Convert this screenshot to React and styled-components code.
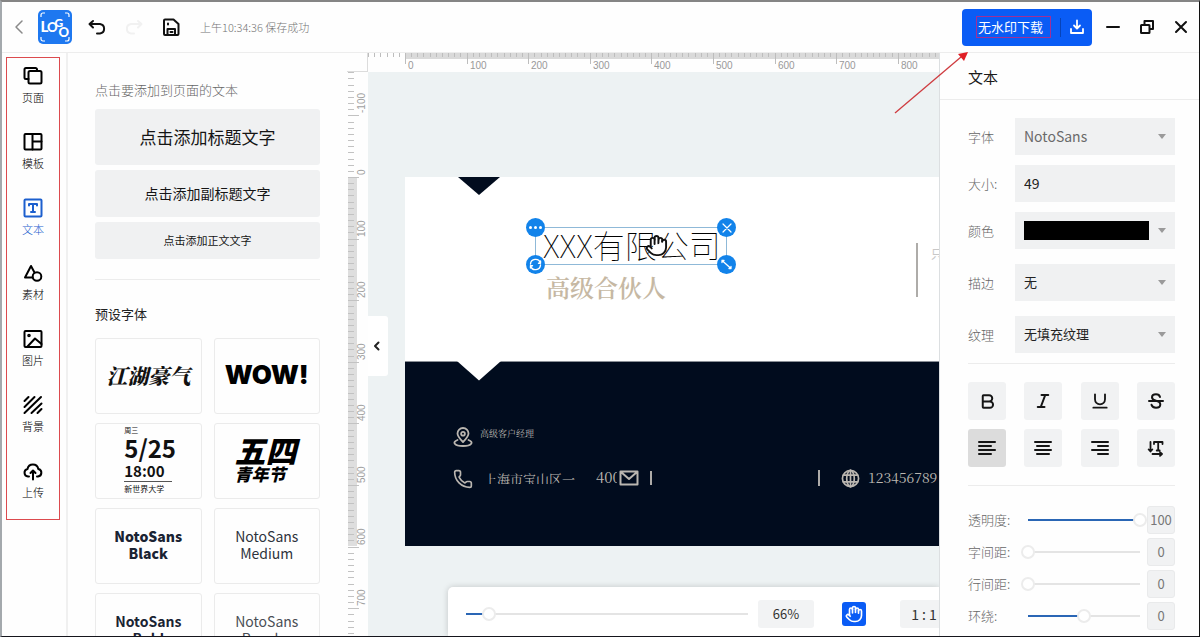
import React, { useState } from "react";
import styled, { createGlobalStyle, css } from "styled-components";
import { Bold, Italic, Underline, Hand, Phone } from "lucide-react";

const sans = `"Noto Sans CJK SC", "Noto Sans", sans-serif`;
const serif = `"Noto Serif CJK SC", "Liberation Serif", "Noto Sans CJK SC", serif`;

const GlobalStyle = createGlobalStyle`
  *, *::before, *::after { box-sizing: border-box; }
  body { margin: 0; font-family: ${sans}; color: #222; background: #fff; }
  button, input, select { font: inherit; color: inherit; margin: 0; padding: 0; border: 0; border-radius: 0; background: none; }
  button { cursor: pointer; }
  svg { display: block; flex: none; }
`;

const Window = styled.div`
  display: flex;
  flex-direction: column;
  height: 100vh;
  overflow: hidden;
  background: #fefefe;
  border-top: 2px solid #858585;
  border-left: 2px solid #a4a9ad;
  border-right: 1px solid #111;
  border-bottom: 1px solid #15151c;
`;

/* ---------- top bar ---------- */

const TopBar = styled.header`
  display: flex;
  align-items: center;
  flex: none;
  height: 51px;
  padding: 0 8px;
  border-bottom: 1px solid #ededed;
`;

const ToolButton = styled.button`
  display: flex;
  align-items: center;
  justify-content: center;
  width: ${(p) => p.$width || 20}px;
  height: 34px;
  color: ${(p) => p.$color || "#111"};
`;

const Brand = styled.a`
  display: block;
  margin: 0 15px 0 10px;
`;

const History = styled.div`
  display: flex;
  gap: 17px;
`;

const SaveStatus = styled.span`
  flex: 1;
  margin-left: 19px;
  font-size: 11px;
  font-weight: 300;
  line-height: 16px;
  color: #757575;
`;

const DownloadGroup = styled.div`
  position: relative;
  display: flex;
  align-items: center;
  height: 37px;
  margin-right: 11px;
  padding-left: 14px;
  border-radius: 4px;
  background: #0a5cf5;
  color: #fff;
`;

const DownloadButton = styled.button`
  height: 22px;
  width: 75px;
  border: 1px solid #a32f95;
  padding-right: 6px;
  font-size: 13px;
  line-height: 20px;
  white-space: nowrap;
`;

const DownloadMenuButton = styled.button`
  display: flex;
  align-items: center;
  justify-content: center;
  width: 32px;
  height: 19px;
  margin-left: 9px;
  border-left: 1px solid #0743b8;
`;

const PointerArrow = styled.svg`
  position: absolute;
  left: -69px;
  top: 43px;
  z-index: 5;
  pointer-events: none;
`;

const WindowControls = styled.div`
  display: flex;
  gap: 14px;
`;

/* ---------- body ---------- */

const Body = styled.div`
  display: flex;
  flex: 1;
  min-height: 0;
`;

const Rail = styled.nav`
  flex: none;
  width: 66px;
  padding: 4px 0 0 4px;
  border-right: 2px solid #f0f0f0;
`;

const RailList = styled.div`
  display: flex;
  flex-direction: column;
  justify-content: space-between;
  width: 54px;
  min-height: 463px;
  padding: 8px 0 19px;
  border: 1px solid #dc4a4e;
`;

const RailItem = styled.button`
  display: flex;
  flex-direction: column;
  align-items: center;
  gap: 3px;
  font-size: 11px;
  font-weight: 300;
  line-height: 16px;
  color: ${(p) => (p.$active ? "#1c5fce" : "#000")};
`;

const SidePanel = styled.section`
  flex: none;
  width: 279px;
  padding: 27px 27px 0;
  overflow: hidden;
`;

const PanelHeading = styled.h2`
  margin: 0 0 ${(p) => p.$gap}px;
  font-size: 13px;
  font-weight: ${(p) => (p.$muted ? 300 : 400)};
  line-height: 20px;
  color: ${(p) => (p.$muted ? "#666" : "#222")};
`;

const AddButtons = styled.div`
  display: flex;
  flex-direction: column;
  gap: 5px;
  padding-bottom: 20px;
  margin-bottom: 24px;
  border-bottom: 1px solid #ececec;
`;

const AddText = styled.button`
  height: ${(p) => p.$height}px;
  padding-bottom: 2px;
  border-radius: 3px;
  background: #f0f1f2;
  font-size: ${(p) => p.$size}px;
  color: #151515;
`;

const PresetGrid = styled.div`
  display: grid;
  grid-template-columns: 1fr 1fr;
  grid-auto-rows: 76px;
  gap: 9px 12px;
`;

const Preset = styled.button`
  display: flex;
  flex-direction: column;
  align-items: center;
  justify-content: center;
  padding-bottom: 2px;
  border: 1px solid #ebebeb;
  border-radius: 3px;
  font-size: 14px;
  line-height: 17px;
  font-weight: ${(p) => p.$weight || 400};
  color: ${(p) => p.$color || "#1a2333"};
`;

const BrushText = styled.span`
  font-family: "Noto Serif CJK SC", "Noto Sans CJK SC", serif;
  font-size: 21px;
  font-weight: 900;
  font-style: italic;
  line-height: 28px;
  color: #111;
`;

const WowText = styled.span`
  font-family: Inter, "Open Sans", sans-serif;
  font-size: 26px;
  font-weight: 900;
  line-height: 28px;
  color: #000;
`;

const Poster = styled.span`
  display: flex;
  flex-direction: column;
  align-items: flex-start;
  width: 48px;
  color: #111;
`;

const PosterLine = styled.span`
  font-weight: ${(p) => p.$weight || 400};
  font-size: ${(p) => p.$size}px;
  line-height: ${(p) => p.$line}px;
  white-space: nowrap;
  ${(p) =>
    p.$last &&
    css`
      width: 100%;
      padding-top: 1px;
      border-top: 1px solid #555;
      text-align: left;
    `}
`;

const Slanted = styled.span`
  align-self: stretch;
  padding-left: 20px;
  text-align: left;
  font-size: ${(p) => p.$size}px;
  line-height: ${(p) => p.$line}px;
  font-weight: 900;
  font-style: italic;
  color: #000;
`;

/* ---------- workspace ---------- */

const Workspace = styled.main`
  display: grid;
  grid-template-columns: 21px minmax(0, 1fr);
  grid-template-rows: 19px minmax(0, 1fr);
  flex: 1;
  min-width: 0;
`;

const RulerCorner = styled.div`
  border-right: 1px solid #dcdcdc;
  border-bottom: 1px solid #dcdcdc;
`;

const RulerSvg = styled.svg`
  width: 100%;
  height: 100%;
  font-family: "Liberation Sans", sans-serif;
  font-size: 10px;
`;

const Stage = styled.div`
  position: relative;
  overflow: hidden;
  background: #edf2f3;
`;

const Sheet = styled.div`
  position: absolute;
  left: 37px;
  top: 105px;
  width: 640px;
  height: 369px;
  background: #fff;
`;

const DarkHalf = styled.div`
  position: absolute;
  inset: 184px 0 0;
  background: #010c1e;
  border-top: 1px solid #8a8f96;
`;

const Wedge = styled.svg`
  position: absolute;
  left: 52px;
  top: ${(p) => p.$top}px;
`;

const Item = styled.div`
  position: absolute;
  left: ${(p) => p.$x}px;
  top: ${(p) => p.$y}px;
  width: ${(p) => (p.$w ? `${p.$w}px` : "auto")};
  height: ${(p) => (p.$h ? `${p.$h}px` : "auto")};
  overflow: ${(p) => (p.$clip ? "hidden" : "visible")};
  font-family: ${(p) => (p.$sans ? sans : serif)};
  font-size: ${(p) => p.$size || 15}px;
  font-weight: ${(p) => p.$weight || 400};
  line-height: ${(p) => p.$line || 20}px;
  color: ${(p) => p.$color || "#bab6b0"};
  white-space: nowrap;
`;

const Rule = styled.div`
  position: absolute;
  left: ${(p) => p.$x}px;
  top: ${(p) => p.$y}px;
  width: 2px;
  height: ${(p) => p.$h}px;
  background: #aeaca9;
`;

const Selection = styled.div`
  position: absolute;
  left: 130px;
  top: 50px;
  width: 192px;
  height: 38px;
  padding-left: 7px;
  border: 1px solid #8fb9d8;
  font-size: 32px;
  font-weight: 100;
  line-height: 32px;
  color: #000;
  white-space: nowrap;
`;

const Handle = styled.button`
  position: absolute;
  ${(p) => p.$v}: -10px;
  ${(p) => p.$h}: -10px;
  display: flex;
  align-items: center;
  justify-content: center;
  width: 19px;
  height: 19px;
  border-radius: 50%;
  background: #1283ea;
  color: #fff;
`;

const GrabCursor = styled.span`
  position: absolute;
  left: 109px;
  top: 6px;
`;

const CollapseButton = styled.button`
  position: absolute;
  left: 0;
  top: 244px;
  display: flex;
  align-items: center;
  justify-content: center;
  width: 20px;
  height: 60px;
  padding-right: 3px;
  background: #fff;
  border-radius: 0 3px 3px 0;
`;

const ZoomBar = styled.div`
  position: absolute;
  left: 80px;
  right: 0;
  bottom: 0;
  display: flex;
  align-items: center;
  height: 49px;
  padding: 4px 0 0 11px;
  overflow: hidden;
  border-radius: 5px 0 0 0;
  background: #fff;
  box-shadow: 0 0 6px rgba(0, 0, 0, 0.18);
`;

const ZoomChip = styled.button`
  flex: none;
  width: ${(p) => p.$width}px;
  height: 28px;
  margin-left: ${(p) => p.$gap}px;
  border-radius: 3px;
  background: #f2f3f4;
  font-size: ${(p) => p.$size}px;
  color: #333;
  white-space: nowrap;
`;

const HandButton = styled.button`
  display: flex;
  flex: none;
  align-items: center;
  justify-content: center;
  width: 24px;
  height: 24px;
  margin-left: 28px;
  border-radius: 3px;
  background: #0a5cf5;
  color: #fff;
`;

const Range = styled.input.attrs({ type: "range" })`
  appearance: none;
  display: block;
  flex: ${(p) => (p.$width ? "none" : 1)};
  width: ${(p) => (p.$width ? `${p.$width}px` : "auto")};
  min-width: 0;
  height: 16px;
  background:
    linear-gradient(#2a66b5, #2a66b5) no-repeat 7px center / calc((100% - 14px) * ${(p) => p.value / 100}) 2px,
    linear-gradient(#e4e4e4, #e4e4e4) no-repeat 7px center / calc(100% - 14px) 2px;
  &::-webkit-slider-thumb {
    appearance: none;
    width: 14px;
    height: 14px;
    border: 2px solid #ececec;
    border-radius: 50%;
    background: #fff;
  }
`;

/* ---------- properties ---------- */

const Properties = styled.aside`
  flex: none;
  width: 260px;
  border-left: 1px solid #dcdfe1;
  overflow: hidden;
`;

const PropertiesTitle = styled.h2`
  margin: 0;
  padding: 14px 28px 12px;
  border-bottom: 1px solid #ececec;
  font-size: 15px;
  font-weight: 400;
  line-height: 20px;
  color: #1a1a1a;
`;

const PropertiesBody = styled.div`
  padding: 18px 24px 0 28px;
`;

const FieldRow = styled.div`
  display: flex;
  align-items: center;
  justify-content: space-between;
  margin-bottom: ${(p) => p.$gap}px;
`;

const FieldLabel = styled.label`
  font-size: 13px;
  font-weight: 300;
  line-height: 20px;
  color: #666;
  white-space: nowrap;
`;

const FieldBox = styled.div`
  display: flex;
  align-items: center;
  width: 160px;
  height: 37px;
  padding: 0 9px;
  background: #f0f1f2;
`;

const Select = styled.select`
  appearance: none;
  flex: 1;
  min-width: 0;
  height: 100%;
  padding-bottom: 2px;
  outline: none;
  font-size: ${(p) => p.$size || 13}px;
  color: ${(p) => p.$color || "#222"};
`;

const TextInput = styled.input`
  width: 100%;
  height: 100%;
  padding-bottom: 2px;
  outline: none;
  font-size: 14px;
`;

const SwatchButton = styled.button`
  display: flex;
  align-items: center;
  justify-content: space-between;
  width: 100%;
  height: 100%;
`;

const Swatch = styled.span`
  width: 125px;
  height: 19px;
  background: #000;
`;

const Caret = styled.span`
  width: 0;
  height: 0;
  border: 4px solid transparent;
  border-top: 5px solid #9a9a9a;
  border-bottom: 0;
`;

const FormatGrid = styled.div`
  display: grid;
  grid-template-columns: repeat(4, 38px);
  justify-content: space-between;
  row-gap: 9px;
  padding: 18px 0;
  margin-bottom: 20px;
  border-top: 1px solid #ececec;
  border-bottom: 1px solid #ececec;
`;

const FormatButton = styled.button`
  display: flex;
  align-items: center;
  justify-content: center;
  height: 38px;
  border-radius: 3px;
  background: ${(p) => (p.$active ? "#dcdcdc" : "#f1f2f3")};
  color: #151515;
`;

const SliderRow = styled.div`
  display: flex;
  align-items: center;
  margin-bottom: 4px;

  ${FieldLabel} {
    width: 53px;
  }
`;

const ValueInput = styled.input`
  width: 28px;
  height: 28px;
  padding-bottom: 2px;
  border: 1px solid #e9eaeb;
  border-radius: 3px;
  background: #f1f2f3;
  text-align: center;
  font-size: 13px;
  line-height: 20px;
  color: #777;
`;

/* ---------- icons ---------- */

const Line = ({ size = 20, width = 2, box = 20, children }) => (
  <svg width={size} height={size} viewBox={`0 0 ${box} ${box}`} fill="none" stroke="currentColor" strokeWidth={width} strokeLinecap="round" strokeLinejoin="round" aria-hidden="true">
    {children}
  </svg>
);

const railItems = [
  ["页面", <><path d="M5.500 13H3A1.500 1.500 0 0 1 1.500 11.500V3.500A1.500 1.500 0 0 1 3 2H12.500A1.500 1.500 0 0 1 14 3.500V5" /><rect x="5.500" y="5" width="13" height="12.500" rx="1.500" /></>],
  ["模板", <><rect x="1.500" y="2" width="17" height="15.500" rx="1" /><path d="M9.500 2V17.500M9.500 9.500H18.500" /></>],
  ["文本", <><rect x="1.500" y="1.500" width="17" height="17" rx="1" /><path d="M6 7.500V6H14V7.500M10 6V14M8 14H12" /></>],
  ["素材", <><path d="M9.500 14.500H2L8 3L11.500 9.500" /><circle cx="14" cy="13.500" r="4.300" /></>],
  ["图片", <><rect x="1.500" y="2" width="17" height="16" rx="1" /><circle cx="6" cy="6.500" r="0.800" /><path d="M4.500 17.500L12 9.500L18.500 15" /></>],
  ["背景", <path d="M1.500 6L5.500 2M1.500 12L11.500 2M1.500 18L18 2M8.500 18L18.500 8.500M14.500 18L18.500 14" />],
  ["上传", <><path d="M6 15.500H5A3.800 3.800 0 0 1 4.500 8A5.500 5.500 0 0 1 15.300 8A3.800 3.800 0 0 1 15 15.500H14" /><path d="M10 18.500V10M7.500 12L10 9.500L12.500 12" /></>],
];

const Logo = () => (
  <svg width="34" height="34" viewBox="0 0 34 34" role="img" aria-label="LOGO">
    <rect width="34" height="34" rx="5" fill="#1e78f0" />
    <path d="M3 7V5A2 2 0 0 1 5 3H7M27 3H29A2 2 0 0 1 31 5V7M31 27V29A2 2 0 0 1 29 31H27M7 31H5A2 2 0 0 1 3 29V27" fill="none" stroke="#fff" strokeWidth="1.200" />
    <g fill="#fff" fontFamily="Lato, sans-serif" fontWeight="900">
      <text x="2.500" y="21.500" fontSize="15">L</text>
      <text x="9" y="21.500" fontSize="13">O</text>
      <text x="16.500" y="17" fontSize="12">G</text>
      <text x="20.500" y="26.500" fontSize="13">O</text>
    </g>
  </svg>
);

const AlignIcon = ({ inset, shift }) => (
  <Line size={18} box={18} width={2}>
    {[3, 7, 11, 15].map((y, i) => {
      const cut = i % 2 ? inset : 0;
      return <path key={y} d={`M${1 + cut * shift} ${y}H${17 - cut * (1 - shift)}`} />;
    })}
  </Line>
);

const formats = [
  ["加粗", <Bold size={19} strokeWidth={2.500} />],
  ["斜体", <Italic size={18} strokeWidth={2.700} />],
  ["下划线", <Underline size={20} strokeWidth={2.200} />],
  ["删除线", <Line size={18} box={18}><path d="M13 5C12.500 3 11 2.300 9 2.300C6.500 2.300 5 3.500 5 5.300C5 7.500 7 8.300 9 8.800C11.500 9.400 13.300 10.300 13.300 12.500C13.300 14.500 11.500 15.700 9 15.700C6.800 15.700 5 14.800 4.500 12.800M2 9H16" /></Line>],
  ["左对齐", <AlignIcon inset={4} shift={0} />],
  ["居中", <AlignIcon inset={4} shift={0.5} />],
  ["右对齐", <AlignIcon inset={6} shift={1} />],
  ["文字方向", <Line size={18} box={18} width={1.800}><path d="M3.500 3V12M1.700 10.500L3.500 12.500L5.300 10.500M7 5V3H15.500V5M11.200 3V11.500M9.700 11.500H12.700M5.500 15H14.500M13 13.200L15 15L13 16.800" /></Line>],
];

/* ---------- rulers ---------- */

const STEP = 61.6;

function Ruler({ vertical, origin, band }) {
  const ticks = [];
  for (let i = -20; i <= 180; i++) ticks.push(i);
  const bandSize = vertical ? 9 : 6;
  return (
    <RulerSvg aria-hidden="true">
      {vertical ? (
        <rect x="1" y={origin} width={bandSize} height={band} fill="#dedede" />
      ) : (
        <rect x={origin} y="0" width={band} height={bandSize} fill="#dadada" />
      )}
      {ticks.map((i) => {
        const at = Math.round(origin + (i * STEP) / 10);
        const major = i % 10 === 0;
        const end = major ? 11 : vertical ? 6 : 4;
        return vertical ? (
          <rect key={i} x="1" y={at} width={end} height="1" fill="#c2c2c2" />
        ) : (
          <rect key={i} x={at} y="0" width="1" height={end} fill="#bdbdbd" />
        );
      })}
      {ticks
        .filter((i) => i % 10 === 0 && i >= -10 && i <= (vertical ? 70 : 80))
        .filter((i) => vertical || i >= 0)
        .map((i) => {
          const at = Math.round(origin + (i * STEP) / 10);
          return vertical ? (
            <text key={i} transform={`translate(18 ${at - 2}) rotate(-90)`} fill="#a0a0a0">{i * 10}</text>
          ) : (
            <text key={i} x={at + 3} y="16" fill="#999">{i * 10}</text>
          );
        })}
    </RulerSvg>
  );
}

function SelectField({ id, label, value, gap, size, color }) {
  return (
    <FieldRow $gap={gap}>
      <FieldLabel htmlFor={id}>{label}</FieldLabel>
      <FieldBox>
        <Select id={id} defaultValue={value} $size={size} $color={color}>
          <option>{value}</option>
        </Select>
        <Caret />
      </FieldBox>
    </FieldRow>
  );
}

function SliderField({ id, label, initial, shown }) {
  const [value, setValue] = useState(initial);
  return (
    <SliderRow>
      <FieldLabel htmlFor={id}>{label}</FieldLabel>
      <Range id={id} value={value} onChange={(e) => setValue(Number(e.target.value))} />
      <ValueInput aria-label={label} readOnly value={value === initial ? shown : value} />
    </SliderRow>
  );
}

export default function App() {
  const [active, setActive] = useState("文本");
  const [align, setAlign] = useState("左对齐");
  const [zoom, setZoom] = useState(8);

  return (
    <Window>
      <GlobalStyle />
      <TopBar>
        <ToolButton $width={18} $color="#8a8a8a" aria-label="返回">
          <Line size={16} box={16} width={1.500}><path d="M11 2L5 8L11 14" /></Line>
        </ToolButton>
        <Brand href="#" aria-label="首页"><Logo /></Brand>
        <History>
          <ToolButton aria-label="撤销">
            <Line><path d="M6 4L2.500 7L6 10.500M3 7H13A4.800 4.800 0 0 1 13 16.500H10" /></Line>
          </ToolButton>
          <ToolButton $color="#f1f1f1" aria-label="重做">
            <Line><path d="M14 4L17.500 7L14 10.500M17 7H7A4.800 4.800 0 0 0 7 16.500H10" /></Line>
          </ToolButton>
          <ToolButton aria-label="保存">
            <Line><path d="M3 3.500A1 1 0 0 1 4 2.500H12.500L17.500 7V17A1 1 0 0 1 16.500 18H4A1 1 0 0 1 3 17ZM6.500 17.500V12H14V17.500M7 6.500V7.500M9.500 15H11.500" /></Line>
          </ToolButton>
        </History>
        <SaveStatus>上午10:34:36 保存成功</SaveStatus>
        <DownloadGroup>
          <DownloadButton>无水印下载</DownloadButton>
          <DownloadMenuButton aria-label="下载选项">
            <Line size={16} box={16} width={1.800}><path d="M8 1.500V9M5 6.500L8 9.500L11 6.500M2 10V14H14V10" /></Line>
          </DownloadMenuButton>
          <PointerArrow width="76" height="64" viewBox="0 0 76 64" aria-hidden="true">
            <path d="M2 61L68 5" stroke="#cf3b3f" strokeWidth="1.300" fill="none" />
            <path d="M75 0L71 9L65 2Z" fill="#e01f26" />
          </PointerArrow>
        </DownloadGroup>
        <WindowControls>
          <ToolButton aria-label="最小化"><Line size={16} box={16}><path d="M2 8H14" /></Line></ToolButton>
          <ToolButton aria-label="还原">
            <Line size={16} box={16}><rect x="2" y="6" width="8.500" height="8" rx="0.500" /><path d="M5.500 5.500V2H14V10H11" /></Line>
          </ToolButton>
          <ToolButton aria-label="关闭"><Line size={16} box={16}><path d="M3 3L13 13M13 3L3 13" /></Line></ToolButton>
        </WindowControls>
      </TopBar>

      <Body>
        <Rail>
          <RailList>
            {railItems.map(([name, icon]) => (
              <RailItem key={name} $active={name === active} onClick={() => setActive(name)}>
                <Line>{icon}</Line>
                {name}
              </RailItem>
            ))}
          </RailList>
        </Rail>

        <SidePanel>
          <PanelHeading $muted $gap={9}>点击要添加到页面的文本</PanelHeading>
          <AddButtons>
            <AddText $height={56} $size={17}>点击添加标题文字</AddText>
            <AddText $height={47} $size={14}>点击添加副标题文字</AddText>
            <AddText $height={37} $size={11}>点击添加正文文字</AddText>
          </AddButtons>
          <PanelHeading $gap={14}>预设字体</PanelHeading>
          <PresetGrid>
            <Preset><BrushText>江湖豪气</BrushText></Preset>
            <Preset><WowText>WOW!</WowText></Preset>
            <Preset>
              <Poster>
                <PosterLine $size={7} $line={9}>周三</PosterLine>
                <PosterLine $weight={700} $size={24} $line={26}>5/25</PosterLine>
                <PosterLine $weight={700} $size={15} $line={20}>18:00</PosterLine>
                <PosterLine $last $size={8} $line={11}>新世界大学</PosterLine>
              </Poster>
            </Preset>
            <Preset>
              <Slanted $size={31} $line={28}>五四</Slanted>
              <Slanted $size={17} $line={20}>青年节</Slanted>
            </Preset>
            <Preset $weight={900}>NotoSans<br />Black</Preset>
            <Preset $color="#2e333c">NotoSans<br />Medium</Preset>
            <Preset $weight={700}>NotoSans<br />Bold</Preset>
            <Preset $color="#4a4e55">NotoSans<br />Regular</Preset>
          </PresetGrid>
        </SidePanel>

        <Workspace>
          <RulerCorner />
          <Ruler origin={37} band={640} />
          <Ruler vertical origin={105} band={369} />
          <Stage>
            <Sheet>
              <Wedge $top={0} width="44" height="19"><path d="M1 0H43L22 18Z" fill="#010c1e" /></Wedge>
              <DarkHalf />
              <Wedge $top={184} width="44" height="20"><path d="M0 0H44L22 19.500Z" fill="#fff" /></Wedge>
              <Item $x={141} $y={95} $size={24} $line={30} $weight={600} $color="#c6b8a3">高级合伙人</Item>
              <Rule $x={511} $y={66} $h={54} />
              <Item $x={526} $y={67} $size={12} $sans $color="#c8c8c8">只</Item>
              <Selection>
                XXX有限公司
                <GrabCursor><Hand size={23} strokeWidth={2} fill="#fff" color="#111" /></GrabCursor>
                <Handle $v="top" $h="left" aria-label="更多">
                  <svg width="15" height="5" viewBox="0 0 15 5" fill="currentColor"><circle cx="2.500" cy="2.500" r="1.500" /><circle cx="7.500" cy="2.500" r="1.500" /><circle cx="12.500" cy="2.500" r="1.500" /></svg>
                </Handle>
                <Handle $v="top" $h="right" aria-label="删除"><Line size={12} box={12} width={1.200}><path d="M2 2L10 10M10 2L2 10" /></Line></Handle>
                <Handle $v="bottom" $h="left" aria-label="旋转"><Line size={13} box={13} width={1.400}><path d="M1.500 6A5 5 0 0 1 11.300 5M11.500 7A5 5 0 0 1 1.700 8M11.500 3V5.200H9.500M1.500 10V7.800H3.500" /></Line></Handle>
                <Handle $v="bottom" $h="right" aria-label="缩放"><Line size={13} box={13} width={1.300}><path d="M2 2.500L11 10.500M2 4.500V2.500H4M11 8.500V10.500H9" /></Line></Handle>
              </Selection>

              <Item $x={48} $y={250}>
                <Line size={20} width={1.800}><path d="M10 15C6.500 11.500 4.500 9.500 4.500 6.500A5.500 5.500 0 0 1 15.500 6.500C15.500 9.500 13.500 11.500 10 15ZM4.500 13C-1 15 1 19 10 19S21 15 15.500 13" /><circle cx="10" cy="6.800" r="1.900" /></Line>
              </Item>
              <Item $x={75} $y={247} $size={9}>高级客户经理</Item>
              <Item $x={48} $y={292}><Phone size={20} strokeWidth={2} /></Item>
              <Item $x={79} $y={294} $w={93} $h={13} $size={13} $line={16} $clip>上海市宝山区一</Item>
              <Item $x={191} $y={290} $w={21} $clip>400</Item>
              <Item $x={214} $y={291}>
                <Line size={20} width={2}><path d="M1.500 3.500H18.500V16.500H1.500ZM2 4L10 11L18 4" /></Line>
              </Item>
              <Rule $x={245} $y={294} $h={14} />
              <Rule $x={413} $y={293} $h={16} />
              <Item $x={436} $y={292}>
                <Line size={19} width={1.800}><circle cx="10" cy="10" r="8.500" /><ellipse cx="10" cy="10" rx="4" ry="8.500" /><path d="M10 1.500V18.500M2.500 6.500H17.500M2.500 13.500H17.500" /></Line>
              </Item>
              <Item $x={463} $y={290} $size={14}>123456789</Item>
            </Sheet>

            <CollapseButton aria-label="收起"><Line size={10} box={10}><path d="M6.500 1.500L3 5L6.500 8.500" /></Line></CollapseButton>

            <ZoomBar>
              <Range $width={296} aria-label="缩放比例" value={zoom} onChange={(e) => setZoom(Number(e.target.value))} />
              <ZoomChip $width={56} $gap={3} $size={13}>66%</ZoomChip>
              <HandButton aria-label="移动画布"><Hand size={18} strokeWidth={2.200} /></HandButton>
              <ZoomChip $width={48} $gap={34} $size={14}>1 : 1</ZoomChip>
            </ZoomBar>
          </Stage>
        </Workspace>

        <Properties>
          <PropertiesTitle>文本</PropertiesTitle>
          <PropertiesBody>
            <SelectField id="font" label="字体" value="NotoSans" gap={10} size={14} color="#6a6a6a" />
            <FieldRow $gap={10}>
              <FieldLabel htmlFor="size">大小:</FieldLabel>
              <FieldBox><TextInput id="size" type="text" defaultValue="49" /></FieldBox>
            </FieldRow>
            <FieldRow $gap={15}>
              <FieldLabel htmlFor="color">颜色</FieldLabel>
              <FieldBox><SwatchButton id="color"><Swatch /><Caret /></SwatchButton></FieldBox>
            </FieldRow>
            <SelectField id="stroke" label="描边" value="无" gap={15} />
            <SelectField id="texture" label="纹理" value="无填充纹理" gap={10} />
            <FormatGrid>
              {formats.map(([name, icon], i) => (
                <FormatButton key={name} aria-label={name} $active={name === align} onClick={() => i > 3 && i < 7 && setAlign(name)}>
                  {icon}
                </FormatButton>
              ))}
            </FormatGrid>
            <SliderField id="opacity" label="透明度:" initial={100} shown="100" />
            <SliderField id="tracking" label="字间距:" initial={0} shown="0" />
            <SliderField id="leading" label="行间距:" initial={0} shown="0" />
            <SliderField id="curve" label="环绕:" initial={50} shown="0" />
          </PropertiesBody>
        </Properties>
      </Body>
    </Window>
  );
}
